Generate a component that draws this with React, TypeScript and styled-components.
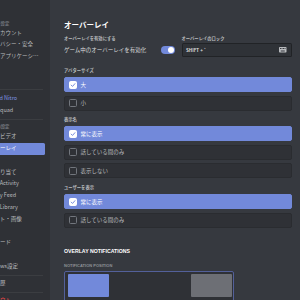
import React, { FC } from 'react';
import styled, { createGlobalStyle } from 'styled-components';

const GlobalStyle = createGlobalStyle`
  html, body {
    margin: 0;
    padding: 0;
    width: 300px;
    height: 300px;
    overflow: hidden;
    background: #36393f;
  }
  * { box-sizing: border-box; }
`

const FONT = `"Noto Sans CJK JP", "Noto Sans", "Liberation Sans", sans-serif`;

const Layout = styled.div`
  display: flex;
  width: 300px;
  height: 300px;
  font-family: ${FONT};
`

const Sidebar = styled.nav`
  width: 50px;
  flex-shrink: 0;
  background: #2f3136;
  overflow: hidden;
`

// the list is scrolled/cropped so the labels begin left of the window edge
const SideInner = styled.div`
  width: 70px;
  margin-left: -25px;
  padding-top: 18.5px;
`

const SideHeader = styled.div`
  height: 9px;
  line-height: 9px;
  padding-left: 8.5px;
  font-size: 4.3px;
  font-weight: 700;
  color: #72767d;
  white-space: nowrap;
`

type Tone = 'normal' | 'nitro' | 'danger';

const SideItem = styled.div<{ $active?: boolean; $tone?: Tone }>`
  height: 11.8px;
  line-height: 11.8px;
  padding: 0 2px 0 8.5px;
  border-radius: 1.5px;
  font-size: 5.5px;
  white-space: nowrap;
  overflow: hidden;
  text-overflow: ellipsis;
  background: ${(p) => (p.$active ? '#7289da' : 'transparent')};
  color: ${(p) =>
    p.$active ? '#ffffff' : p.$tone === 'nitro' ? '#7f95e6' : p.$tone === 'danger' ? '#f04747' : '#b9bbbe'};
`

const SideDivider = styled.div<{ $mt: number; $mb: number }>`
  height: 1px;
  margin: ${(p) => p.$mt}px 2px ${(p) => p.$mb}px 8.5px;
  background: rgba(255, 255, 255, 0.06);
`

const Main = styled.main`
  flex: 1;
  padding: 19.8px 8px 0 14px;
  overflow: hidden;
`

const Title = styled.h2`
  margin: 0;
  font-size: 7.5px;
  line-height: 9px;
  font-weight: 700;
  color: #ffffff;
`

const Columns = styled.div`
  display: grid;
  grid-template-columns: 1fr 1fr;
  column-gap: 7px;
  margin-top: 7px;
`

const FieldLabel = styled.div`
  font-size: 4.3px;
  line-height: 5px;
  font-weight: 700;
  color: #b9bbbe;
  margin-bottom: 2px;
  white-space: nowrap;
`

const ToggleRow = styled.div`
  display: flex;
  align-items: center;
  justify-content: space-between;
  height: 14.5px;
  font-size: 5.5px;
  color: #dcddde;
`

const Toggle = styled.div<{ $on: boolean }>`
  display: flex;
  align-items: center;
  justify-content: ${(p) => (p.$on ? 'flex-end' : 'flex-start')};
  width: 13.3px;
  height: 8px;
  padding: 1px;
  border-radius: 4px;
  background: ${(p) => (p.$on ? '#7289da' : '#72767d')};
`

const Knob = styled.span`
  width: 6px;
  height: 6px;
  border-radius: 50%;
  background: #ffffff;
`

const KeyInput = styled.div`
  display: flex;
  align-items: center;
  justify-content: space-between;
  height: 14.5px;
  padding: 0 4.5px 0 3.5px;
  border-radius: 1.5px;
  background: rgba(0, 0, 0, 0.12);
  border: 1px solid rgba(0, 0, 0, 0.3);
  font-size: 4.5px;
  font-weight: 700;
  color: #dcddde;
`

const Group = styled.section<{ $mt: number }>`
  margin-top: ${(p) => p.$mt}px;
`

const GroupLabel = styled(FieldLabel)`
  margin-bottom: 4px;
`

const Options = styled.div`
  display: flex;
  flex-direction: column;
  gap: 3.5px;
`

const Option = styled.div<{ $selected: boolean }>`
  display: flex;
  align-items: center;
  gap: 4px;
  height: 15px;
  padding-left: 3.5px;
  border-radius: 2px;
  font-size: 5.5px;
  background: ${(p) => (p.$selected ? '#7289da' : '#2f3136')};
  border: 1px solid ${(p) => (p.$selected ? '#7289da' : '#2a2c30')};
  color: ${(p) => (p.$selected ? '#ffffff' : '#b9bbbe')};
`

const Check = styled.span<{ $checked: boolean }>`
  display: flex;
  align-items: center;
  justify-content: center;
  width: 8px;
  height: 8px;
  border-radius: 1.5px;
  background: ${(p) => (p.$checked ? '#ffffff' : 'transparent')};
  border: 1px solid ${(p) => (p.$checked ? '#ffffff' : '#72767d')};
`

const SectionTitle = styled.h3`
  margin: 20.3px 0 0;
  font-size: 5.2px;
  line-height: 7px;
  font-weight: 700;
  color: #ffffff;
  text-transform: uppercase;
  font-family: "Liberation Sans", sans-serif;
`

const SmallCaps = styled.div`
  margin-top: 7.7px;
  font-size: 4px;
  line-height: 5px;
  font-weight: 700;
  color: #8e9297;
  text-transform: uppercase;
  font-family: "Liberation Sans", sans-serif;
`

const PositionBox = styled.div`
  margin-top: 3.1px;
  width: 170px;
  height: 60px;
  padding: 2px 1.5px 0 2.5px;
  border: 1px solid #53609a;
  border-radius: 2px;
  background: #2f3136;
`

const Corners = styled.div`
  display: flex;
  justify-content: space-between;
`

const Corner = styled.div<{ $selected: boolean }>`
  width: 41px;
  height: 23px;
  border-radius: 1px;
  background: ${(p) => (p.$selected ? '#7289da' : '#6d6f75')};
`

const sideEntries: Array<
  | { kind: 'header'; label: string }
  | { kind: 'item'; label: string; active?: boolean; tone?: Tone }
  | { kind: 'divider'; mt: number; mb: number }
> = [
  { kind: 'header', label: 'ユーザー設定' },
  { kind: 'item', label: 'マイアカウント' },
  { kind: 'item', label: 'プライバシー・安全' },
  { kind: 'item', label: '認証済アプリケーション' },
  { kind: 'item', label: '接続' },
  { kind: 'item', label: '請求' },
  { kind: 'divider', mt: 3, mb: 2.5 },
  { kind: 'item', label: 'Discord Nitro', tone: 'nitro' },
  { kind: 'item', label: 'HypeSquad' },
  { kind: 'divider', mt: 2, mb: 2.6 },
  { kind: 'header', label: 'アプリの設定' },
  { kind: 'item', label: '音声・ビデオ' },
  { kind: 'item', label: 'オーバーレイ', active: true },
  { kind: 'item', label: '通知' },
  { kind: 'item', label: 'キー割り当て' },
  { kind: 'item', label: 'Game Activity' },
  { kind: 'item', label: 'Activity Feed' },
  { kind: 'item', label: 'Game Library' },
  { kind: 'item', label: 'テキスト・画像' },
  { kind: 'item', label: '外観' },
  { kind: 'item', label: '配信モード' },
  { kind: 'item', label: '言語' },
  { kind: 'item', label: 'Windows設定' },
  { kind: 'divider', mt: 2, mb: 2.5 },
  { kind: 'item', label: '変更履歴' },
  { kind: 'divider', mt: 2, mb: 2 },
  { kind: 'item', label: 'ログアウト', tone: 'danger' },
];

const groups = [
  { label: 'アバターサイズ', mt: 11, options: ['大', '小'], selected: 0 },
  { label: '表示名', mt: 6.5, options: ['常に表示', '話している間のみ', '表示しない'], selected: 0 },
  { label: 'ユーザーを表示', mt: 7, options: ['常に表示', '話している間のみ'], selected: 0 },
];

const CheckMark: FC = () => (
  <svg width="6" height="6" viewBox="0 0 10 10">
    <path d="M2 5.2 L4.2 7.4 L8.2 2.8" fill="none" stroke="#7289da" strokeWidth="1.6" strokeLinecap="round" strokeLinejoin="round" />
  </svg>
);

const KeyboardIcon: FC = () => (
  <svg width="7.5" height="5.5" viewBox="0 0 15 11">
    <rect x="0" y="0" width="15" height="11" rx="1.5" fill="#b9bbbe" />
    <g fill="#36393f">
      <rect x="2" y="2" width="2" height="2" />
      <rect x="5" y="2" width="2" height="2" />
      <rect x="8" y="2" width="2" height="2" />
      <rect x="11" y="2" width="2" height="2" />
      <rect x="3.5" y="7" width="8" height="2" />
    </g>
  </svg>
);

const App: FC = () => {
  return (
    <>
      <GlobalStyle />
      <Layout>
        <Sidebar>
          <SideInner>
            {sideEntries.map((e, i) =>
              e.kind === 'header'
                ? <SideHeader key={i}>{e.label}</SideHeader>
                : e.kind === 'divider'
                  ? <SideDivider key={i} $mt={e.mt} $mb={e.mb} />
                  : <SideItem key={i} $active={e.active} $tone={e.tone}>{e.label}</SideItem>
            )}
          </SideInner>
        </Sidebar>
        <Main>
          <Title>オーバーレイ</Title>
          <Columns>
            <div>
              <FieldLabel>オーバーレイを有効にする</FieldLabel>
              <ToggleRow>
                ゲーム中のオーバーレイを有効化
                <Toggle $on={true}><Knob /></Toggle>
              </ToggleRow>
            </div>
            <div>
              <FieldLabel>オーバーレイのロック</FieldLabel>
              <KeyInput>
                SHIFT + `
                <KeyboardIcon />
              </KeyInput>
            </div>
          </Columns>
          {groups.map((g) => (
            <Group key={g.label} $mt={g.mt}>
              <GroupLabel>{g.label}</GroupLabel>
              <Options>
                {g.options.map((o, i) => (
                  <Option key={o} $selected={i === g.selected}>
                    <Check $checked={i === g.selected}>{i === g.selected && <CheckMark />}</Check>
                    {o}
                  </Option>
                ))}
              </Options>
            </Group>
          ))}
          <SectionTitle>Overlay Notifications</SectionTitle>
          <SmallCaps>Notification Position</SmallCaps>
          <PositionBox>
            <Corners>
              <Corner $selected={true} />
              <Corner $selected={false} />
            </Corners>
          </PositionBox>
        </Main>
      </Layout>
    </>
  );
};

export default App;
